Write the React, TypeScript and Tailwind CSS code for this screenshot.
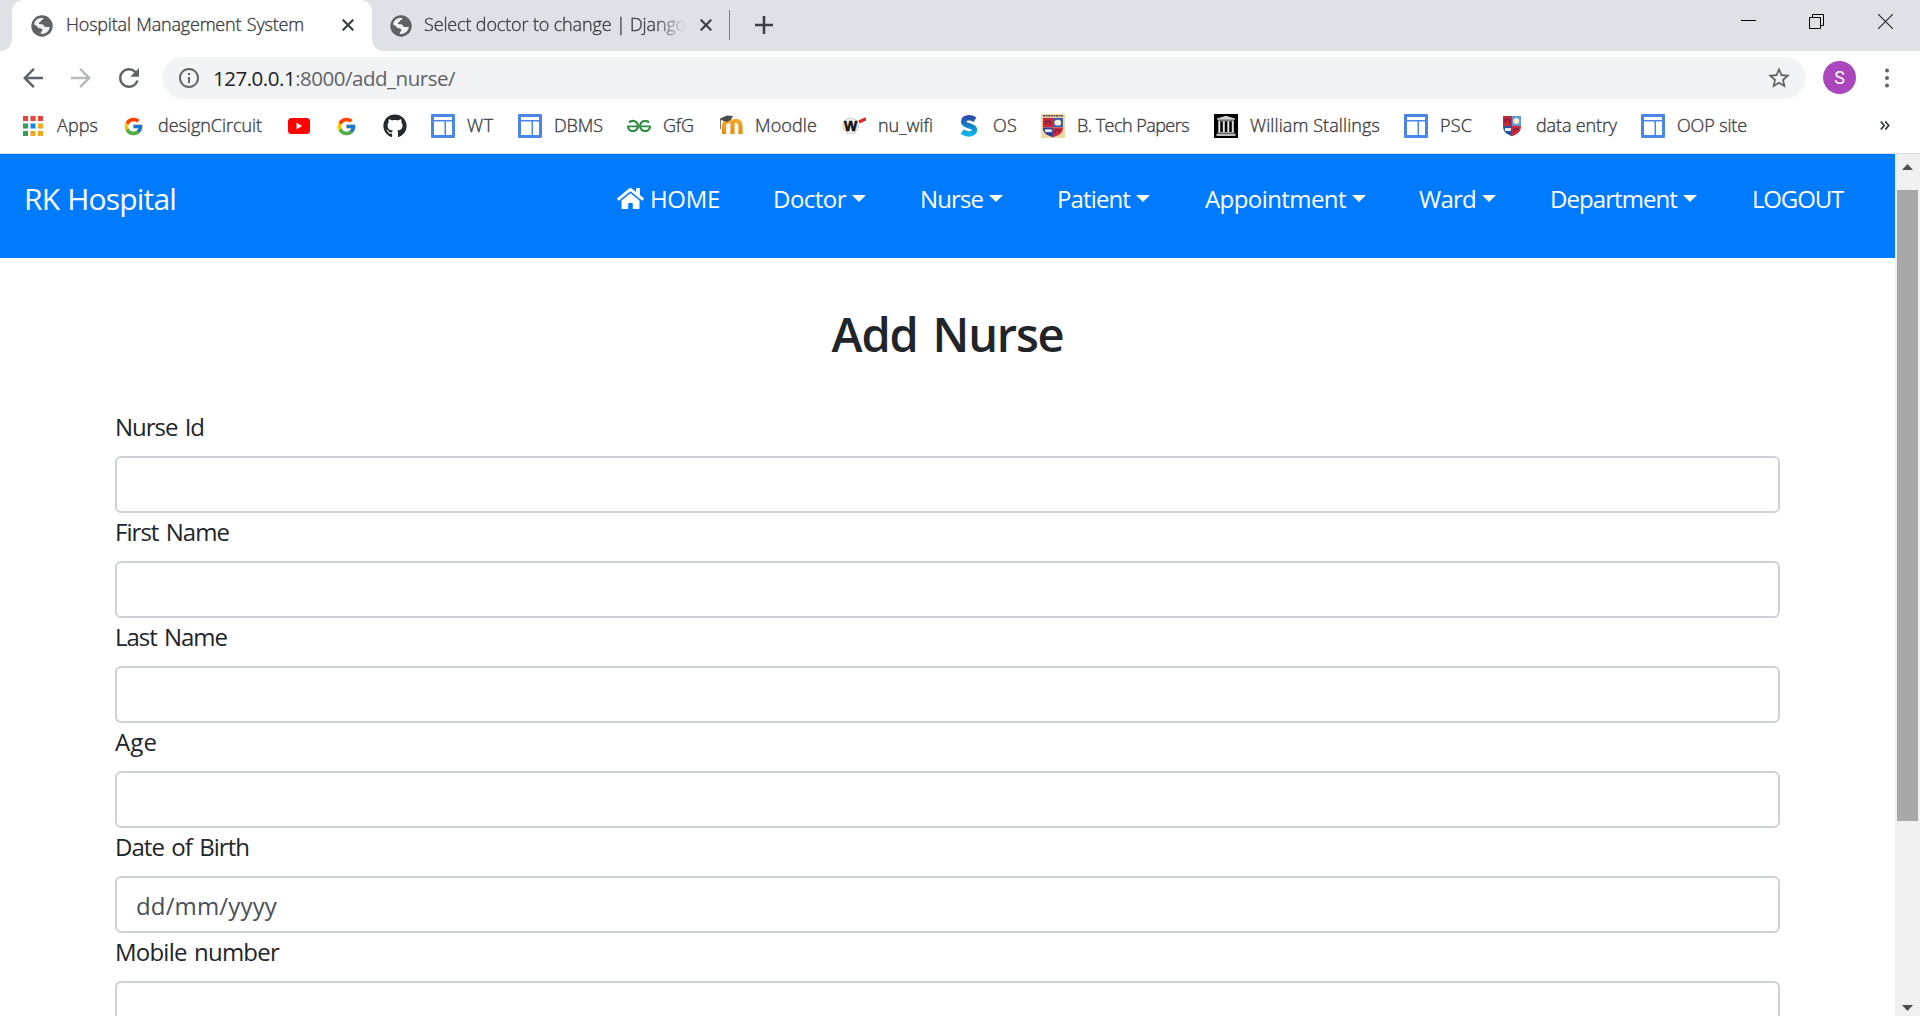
import { useLayoutEffect, useRef, useState } from "react";
import type { ReactNode } from "react";
import { FcGoogle } from "react-icons/fc";
import { FaGithub, FaHome } from "react-icons/fa";
import { SiGeeksforgeeks } from "react-icons/si";
import { MdArrowBack, MdArrowForward, MdInfoOutline, MdRefresh, MdStarBorder } from "react-icons/md";

/** Text whose letter spacing is adjusted so that it fills the given width. */
function Fit({ w, className = "", children }: { w: number; className?: string; children: ReactNode }) {
  const ref = useRef<HTMLSpanElement>(null);
  const [spacing, setSpacing] = useState(0);
  useLayoutEffect(() => {
    const el = ref.current;
    if (!el) return;
    const natural = el.getBoundingClientRect().width;
    setSpacing((w - natural) / (el.textContent || " ").length);
  }, [w]);
  return (
    <span ref={ref} className={`inline-block shrink-0 whitespace-nowrap ${className}`} style={{ letterSpacing: `${spacing}px` }}>
      {children}
    </span>
  );
}

function Globe() {
  return (
    <svg viewBox="0 0 22 22" className="size-[22px] shrink-0">
      <circle cx="11" cy="11" r="10.7" fill="#5f6368" />
      <path
        d="M3 9.2c.6-3 3-5.600 6.200-6.100l3-.1c.4 1.200-.5 2-1.600 2.300-.9.300-.5 1.300-1.300 1.800-.8.400-1.500.3-1.500 1.200 0 .8.8.900 1.800.900 1.700 0 3 .2 3.400 1.500.3 1 1.300 1.300 2.400 1.300l3.400.1c-.5 3.500-3.400 6.600-7.300 6.900l-1.700-.2c-.1-1.300.2-2 .9-2.400.8-.500.9-1.300.5-2-.5-.9-1.500-1.200-2.600-1.200-1.500 0-1.900-1.200-2.600-2C5.200 10.300 4 10.100 3 9.200z"
        fill="#f1f3f4"
      />
    </svg>
  );
}

function Cross({ className = "" }: { className?: string }) {
  return (
    <svg viewBox="0 0 12 12" className={`mb-px size-3 shrink-0 ${className}`}>
      <path d="M.7.7l10.600 10.600M11.300.7L.7 11.300" stroke="#3c4043" strokeWidth="2.200" />
    </svg>
  );
}

function AppsIcon() {
  const colors = ["#ea4335", "#ea4335", "#ea4335", "#34a058", "#1a86e8", "#f2a71b", "#34a058", "#f2a71b", "#f2a71b"];
  return (
    <svg viewBox="0 0 20 20" className="size-5">
      {colors.map((c, i) => (
        <rect key={i} x={(i % 3) * 7.5} y={Math.floor(i / 3) * 7.5} width="5" height="5" fill={c} />
      ))}
    </svg>
  );
}

function YouTube() {
  return (
    <svg viewBox="0 0 22 16" className="h-4 w-[22px]">
      <rect width="22" height="16" rx="3.500" fill="#f00" />
      <path d="M8.500 4.700v6.600l5.700-3.300z" fill="#fff" />
    </svg>
  );
}

function Sites() {
  return (
    <svg viewBox="0 0 24 24" className="size-6">
      <rect width="24" height="24" rx="1" fill="#4a86e8" />
      <path d="M3 3h18v3H3zM3 7.500h10.500V21H3zM15 7.500h6V21h-6z" fill="#fff" />
    </svg>
  );
}

function Moodle() {
  return (
    <svg viewBox="0 0 24 24" className="size-6">
      <defs>
        <linearGradient id="moodle" x1="0" y1="0" x2="0" y2="1">
          <stop offset="0" stopColor="#f7a72b" />
          <stop offset="1" stopColor="#e58b0c" />
        </linearGradient>
      </defs>
      <path d="M5 20v-8c0-6 7-6.500 8.500-3 1.500-3.500 8-3 8 3v8M13.500 20V9" fill="none" stroke="url(#moodle)" strokeWidth="4.200" />
      <path d="M1 4.500l7-3 6 .5-2 3.500-4 2.500-6-2z" fill="#4a4a4a" />
      <path d="M1.500 5v10" stroke="#777" strokeWidth="1" />
    </svg>
  );
}

function Wifi() {
  return (
    <svg viewBox="0 0 24 24" className="size-6">
      <circle cx="8.500" cy="12" r="7.800" fill="#eee" stroke="#b4b4b4" strokeWidth="1" strokeDasharray="2 1" />
      <text x="8.700" y="16.500" textAnchor="middle" fontFamily="Liberation Sans, sans-serif" fontWeight="700" fontSize="14" fill="#111" stroke="#111" strokeWidth=".6">W</text>
      <path d="M17 8l7-3.200" stroke="#e8202a" strokeWidth="3.200" />
    </svg>
  );
}

function SLogo() {
  return (
    <svg viewBox="0 0 24 24" className="size-6">
      <defs>
        <linearGradient id="slogo" x1="0" y1="0" x2="0" y2="1">
          <stop offset="0" stopColor="#2b4fa8" />
          <stop offset=".55" stopColor="#0f86cf" />
          <stop offset="1" stopColor="#14b4e6" />
        </linearGradient>
      </defs>
      <path d="M18 5.700C13.500 2.800 6.500 3 6.700 7.800c.2 5 10.800 3 10.800 8 0 5-8 5.200-12.300 1.900" fill="none" stroke="url(#slogo)" strokeWidth="5.400" />
    </svg>
  );
}

function Shield({ boxed = false }: { boxed?: boolean }) {
  return (
    <svg viewBox="0 0 24 24" className="size-6">
      {boxed && <rect width="24" height="24" fill="#f0d9a4" />}
      {boxed && <path d="M2 1.800h20" stroke="#4a4658" strokeWidth="1.400" strokeDasharray="2 .6" />}
      <g transform={boxed ? "translate(-1.500 2) scale(1.120 .95)" : ""}>
        <path d="M3 2h9v10H3z" fill="#c9283c" />
        <path d="M12 2h9v10h-9z" fill={boxed ? "#3f5fa8" : "#5b9bd8"} />
        <path d="M3 12h9v10.300C7 20.500 3 18 3 12z" fill={boxed ? "#2b3f92" : "#2554a5"} />
        <path d="M12 12h9c0 6-4 8.500-9 10.300z" fill="#d3293b" />
        <circle cx="16.300" cy="7" r="3" fill="#f6efd0" />
        <path d="M5.500 9V5.500h4V9M14 18.500v-3.500h4v2" stroke="#7c2145" strokeWidth="1.400" fill="none" />
        <rect x="5" y="14" width="6" height="3" fill="#e4edf8" />
      </g>
    </svg>
  );
}

function Columns() {
  return (
    <svg viewBox="0 0 24 24" className="size-6">
      <rect width="24" height="24" fill="#000" />
      <path d="M3 5.800V4.500L12 1.800l9 2.700v1.300z" fill="#d4d4d4" />
      <path d="M5.300 7v11M9.800 7v11M14.300 7v11M18.800 7v11" stroke="#e2e2e2" strokeWidth="2" />
      <path d="M4 6.800h16M4 18.500h16" stroke="#aaa" strokeWidth="1" />
      <path d="M2.500 19.500h19v2.500h-19z" fill="#bdbdbd" />
    </svg>
  );
}

type Bookmark = { box: string; icon: ReactNode; label?: string; w?: number };

const bookmarks: Bookmark[] = [
  { box: "w-[101px]", icon: <AppsIcon />, label: "Apps", w: 41 },
  { box: "w-[165px]", icon: <FcGoogle className="-ml-px size-[21px]" />, label: "designCircuit", w: 104 },
  { box: "w-[48px]", icon: <YouTube /> },
  { box: "w-[48px]", icon: <FcGoogle className="-ml-px size-[21px]" /> },
  { box: "w-[48px]", icon: <FaGithub className="size-6 text-[#24292e]" /> },
  { box: "w-[87px]", icon: <Sites />, label: "WT", w: 27 },
  { box: "w-[109px]", icon: <Sites />, label: "DBMS", w: 49 },
  { box: "w-[92px]", icon: <SiGeeksforgeeks className="size-6 text-[#2f8d46]" />, label: "GfG", w: 31 },
  { box: "w-[123px]", icon: <Moodle />, label: "Moodle", w: 62 },
  { box: "w-[115px]", icon: <Wifi />, label: "nu_wifi", w: 55 },
  { box: "w-[84px]", icon: <SLogo />, label: "OS", w: 24 },
  { box: "w-[173px]", icon: <Shield boxed />, label: "B. Tech Papers", w: 112 },
  { box: "w-[190px]", icon: <Columns />, label: "William Stallings", w: 130 },
  { box: "w-[96px]", icon: <Sites />, label: "PSC", w: 32 },
  { box: "w-[141px]", icon: <Shield />, label: "data entry", w: 81 },
  { box: "w-[110px]", icon: <Sites />, label: "OOP site", w: 70 },
];

const menus = [
  { box: "w-[147px]", label: "Doctor", w: 73 },
  { box: "w-[137px]", label: "Nurse", w: 63 },
  { box: "w-[148px]", label: "Patient", w: 73 },
  { box: "w-[214px]", label: "Appointment", w: 141 },
  { box: "w-[131px]", label: "Ward", w: 57 },
  { box: "w-[202px]", label: "Department", w: 127 },
];

const fields = [
  { label: "Nurse Id", w: 89 },
  { label: "First Name", w: 114 },
  { label: "Last Name", w: 112 },
  { label: "Age", w: 42 },
  { label: "Date of Birth", w: 134, placeholder: "dd/mm/yyyy" },
  { label: "Mobile number", w: 164 },
];

function TabStrip() {
  return (
    <header className="flex h-[51px] shrink-0 bg-[#dee1e6] text-[18px] leading-[24px] font-light text-[#3c4043]">
      <div className="flex w-3 items-end bg-white">
        <div className="h-full w-full rounded-br-[12px] bg-[#dee1e6]" />
      </div>
      <div className="flex w-[360px] items-center rounded-t-[12px] bg-white pl-[19px]">
        <Globe />
        <Fit w={238} className="mb-[3px] ml-[13px] [-webkit-text-stroke:0.35px_#3c4043] [word-spacing:1px]">Hospital Management System</Fit>
        <Cross className="ml-[38px]" />
      </div>
      <div className="w-[358px] bg-white">
        <div className="flex h-full items-center rounded-bl-[12px] bg-[#dee1e6] pl-[18px]">
          <Globe />
          <Fit w={262} className="mb-[3px] ml-[12px] [-webkit-text-stroke:0.35px_#3c4043] [mask-image:linear-gradient(to_right,black_88%,transparent)]">
            Select doctor to change | Django
          </Fit>
          <Cross className="ml-[14px]" />
        </div>
      </div>
      <div className="flex flex-1 items-center">
        <div className="-mt-px -ml-px h-[30px] w-px bg-[#7d8085]" />
        <svg viewBox="0 0 18 18" className="mb-px ml-[25px] size-[18px]">
          <path d="M9 0v18M0 9h18" stroke="#3c4043" strokeWidth="2.600" />
        </svg>
        <div className="ml-auto mr-[27px] flex items-center pb-[8px]">
          <div className="-mt-[2px] mr-[53px] h-px w-[15px] bg-black" />
          <svg viewBox="0 0 15 15" className="mr-[54px] size-[15px]" fill="none" stroke="#000">
            <path d="M.5 3.500h11v11H.5zM3.500 3.500v-3h11v11h-3" />
          </svg>
          <svg viewBox="0 0 15 15" className="size-[15px]">
            <path d="M0 0l15 15M15 0L0 15" stroke="#222" strokeWidth="1.100" />
          </svg>
        </div>
      </div>
    </header>
  );
}

function Toolbar() {
  return (
    <div className="flex h-[53px] shrink-0 items-center bg-white pl-[18px] text-[#5f6368]">
      <MdArrowBack className="size-[30px]" />
      <MdArrowForward className="ml-[18px] size-[30px] text-[#b9bbbe]" />
      <MdRefresh className="ml-[18px] size-[30px]" />
      <div className="ml-[18px] flex h-[42px] w-[1644px] items-center rounded-full bg-[#f1f3f4] pl-[15px] pr-[14px]">
        <MdInfoOutline className="size-6" />
        <Fit w={242} className="ml-[12px] text-[20.5px] leading-[28px]">
          <span className="text-[#202124]">127.0.0.1</span>:8000/add_nurse/
        </Fit>
        <MdStarBorder className="ml-auto size-[26px]" />
      </div>
      <div className="ml-[17px] flex size-[33px] items-center justify-center rounded-full bg-[#ab47bc] font-[Roboto,sans-serif] text-[18px] text-white">S</div>
      <svg viewBox="0 0 4 20" className="ml-[29px] h-5 w-1" fill="#5f6368">
        <circle cx="2" cy="2.500" r="2" />
        <circle cx="2" cy="10" r="2" />
        <circle cx="2" cy="17.500" r="2" />
      </svg>
    </div>
  );
}

function BookmarksBar() {
  return (
    <div className="flex h-[50px] shrink-0 items-center border-b border-[#dadce0] bg-white pb-[5px] pl-[21px] text-[18px] leading-[24px] font-light text-[#3c4043]">
      {bookmarks.map((b, i) => (
        <div key={i} className={`flex shrink-0 items-center gap-[12px] ${b.box}`}>
          <div className="flex size-6 shrink-0 items-center justify-center">{b.icon}</div>
          {b.label && <Fit w={b.w ?? 0} className="mb-[2px] [-webkit-text-stroke:0.35px_#3c4043]">{b.label}</Fit>}
        </div>
      ))}
      <svg viewBox="0 0 10 9" className="ml-auto mr-[30px] mb-px h-[9px] w-[10px]" fill="none" stroke="#3c4043" strokeWidth="1.800">
        <path d="M.8.5l3.400 4-3.400 4M5.300.5l3.400 4-3.400 4" />
      </svg>
    </div>
  );
}

function Navbar() {
  return (
    <nav className="flex h-[104px] shrink-0 bg-[#007bff] pl-6 text-[24px] leading-[36px] text-white">
      <Fit w={152} className="mt-[22px] text-[30px] leading-[45px] [word-spacing:1px]">RK Hospital</Fit>
      <div className="ml-auto flex h-[36px] pt-[27px]">
        <a className="flex h-[36px] w-[156px] items-center">
          <FaHome className="mb-px size-[27px] shrink-0" />
          <Fit w={70} className="ml-[6px]">HOME</Fit>
        </a>
        {menus.map((m) => (
          <a key={m.label} className={`flex h-[36px] shrink-0 items-center ${m.box}`}>
            <Fit w={m.w}>{m.label}</Fit>
            <svg viewBox="0 0 14 7" className="mb-px ml-[6px] h-[7px] w-[14px]">
              <path d="M0 0h14L7 7z" fill="#fff" />
            </svg>
          </a>
        ))}
        <a className="w-[143px]">
          <Fit w={91}>LOGOUT</Fit>
        </a>
      </div>
    </nav>
  );
}

function Scrollbar() {
  return (
    <div className="flex w-[25px] shrink-0 flex-col items-center bg-[#f0f0f0]">
      <svg viewBox="0 0 11 6" className="mt-[10px] h-[6px] w-[11px] shrink-0">
        <path d="M0 6h11L5.500 0z" fill="#505050" />
      </svg>
      <div className="mt-[20px] h-[631px] w-[21px] shrink-0 bg-[#a8a8a8]" />
      <svg viewBox="0 0 11 6" className="mb-[5px] mt-auto h-[6px] w-[11px] shrink-0">
        <path d="M0 0h11L5.500 6z" fill="#505050" />
      </svg>
    </div>
  );
}

export default function App() {
  return (
    <div className="flex h-[1016px] w-[1920px] flex-col overflow-hidden bg-white font-['Open_Sans','Noto_Sans',sans-serif]">
      <TabStrip />
      <Toolbar />
      <BookmarksBar />
      <div className="flex min-h-0 flex-1">
        <main className="flex min-w-0 flex-1 flex-col overflow-hidden text-[#212529]">
          <Navbar />
          <h1 className="mt-[47px] shrink-0 text-center text-[47px] leading-[58px] font-semibold">
            <Fit w={232} className="[word-spacing:4px]">Add Nurse</Fit>
          </h1>
          <form className="mt-[45px] flex shrink-0 flex-col px-[115px] text-[24px] leading-[36px]">
            {fields.map((f) => (
              <div key={f.label} className="flex flex-col">
                <label className="mb-3 h-[36px] pt-px">
                  <Fit w={f.w} className="[word-spacing:2px]">{f.label}</Fit>
                </label>
                <div className="flex h-[57px] items-center rounded-[6px] border-2 border-[#ced1d5] px-[19px] pt-[2px] text-[#495057]">
                  {f.placeholder && <Fit w={141}>{f.placeholder}</Fit>}
                </div>
              </div>
            ))}
          </form>
        </main>
        <Scrollbar />
      </div>
    </div>
  );
}
